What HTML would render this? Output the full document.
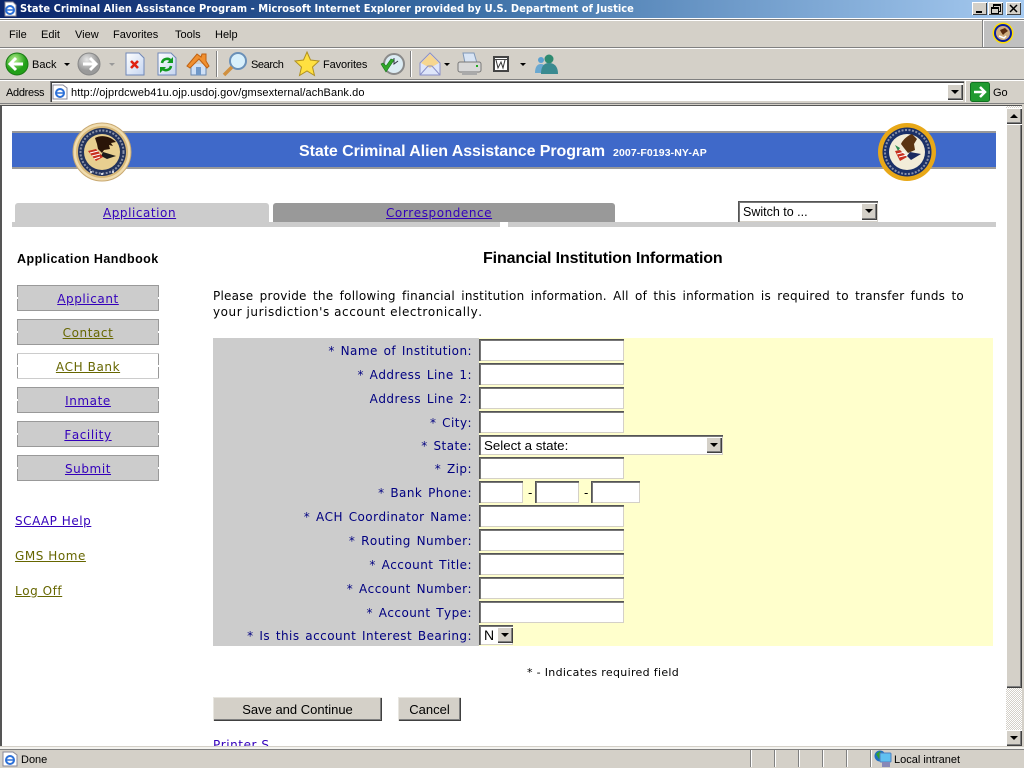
<!DOCTYPE html>
<html lang="en"><head><meta charset="utf-8"><title>State Criminal Alien Assistance Program</title>
<style>
html,body{margin:0;padding:0;width:1024px;height:768px;overflow:hidden;background:#d4d0c8}
body{position:relative;font-family:"Liberation Sans",sans-serif;color:#000}
.a{position:absolute}
.t{position:absolute;white-space:nowrap}
.m{font:11px/14px "Liberation Sans",sans-serif;letter-spacing:0;color:#000}
.l{position:absolute;right:552px;white-space:nowrap;font:12px/16px "DejaVu Sans",sans-serif;font-kerning:none;color:#000080;letter-spacing:.45px;word-spacing:1.5px}
.v{font:12px/16px "DejaVu Sans",sans-serif;font-kerning:none;letter-spacing:.55px}
a{color:#3300bb;text-decoration:underline}
a.o{color:#666600}
.nav{position:absolute;left:17px;width:142px;height:26px;box-sizing:border-box;background:#ccc;border-top:1px solid #999;border-bottom:1px solid #999;text-align:center;font:12px/27px "DejaVu Sans",sans-serif;font-kerning:none;letter-spacing:.58px}
.nav:before,.nav:after{content:"";position:absolute;top:0;bottom:0;width:1px;background:linear-gradient(#999 0,#999 45%,#fff 45%,#fff 55%,#999 55%)}
.nav:before{left:0}.nav:after{right:0}
input.f{position:absolute;left:479px;width:145px;height:22px;box-sizing:border-box;margin:0;padding:0;background:#fff;border:0;box-shadow:inset 1px 1px #555,inset 2px 2px #777,inset -1px -1px #d4d0c8,0 0 0 0 #fff;outline:0}
select.s{position:absolute;box-sizing:border-box;margin:0;padding:0 0 0 5px;border:0;background:#fff;appearance:none;-webkit-appearance:none;font:13.3px "Liberation Sans",sans-serif;color:#000;box-shadow:inset 1px 1px #555,inset 2px 2px #777,inset -1px -1px #d4d0c8,inset -2px -2px #fff}
.ar{position:absolute;width:16px;height:16px;box-sizing:border-box;background:#d4d0c8;box-shadow:inset 1px 1px #fff,inset -1px -1px #404040,inset -2px -2px #808080}
.ar:after{content:"";position:absolute;left:4px;top:6px;border-left:4px solid transparent;border-right:4px solid transparent;border-top:4px solid #000}
.up:after{border-top:0;border-bottom:4px solid #000}
.wb{position:absolute;top:2px;width:15px;height:13px;background:#d4d0c8;box-shadow:inset 1px 1px #fff,inset -1px -1px #404040}
.btn{position:absolute;box-sizing:border-box;border:0;margin:0;padding:0;background:#d4d0c8;font:13px "Liberation Sans",sans-serif;color:#000;box-shadow:inset 1px 1px #e8e6e0,inset -1px -1px #404040,inset -2px -2px #808080}
.dr{position:absolute;width:0;height:0;border-left:3px solid transparent;border-right:3px solid transparent;border-top:3px solid #000}
.sb{position:absolute;top:750px;width:1px;height:17px;background:#808080;box-shadow:1px 0 #fff}
</style></head><body>

<!-- title bar -->
<div class="a" style="left:0;top:0;width:1024px;height:18px;background:linear-gradient(90deg,#0a246a 0,#3a6ea5 45%,#a6caf0 100%)"></div>
<svg class="a" style="left:2px;top:1px" width="16" height="16" viewBox="0 0 16 16"><path d="M3 1h8l3 3v11H3z" fill="#fff" stroke="#889"/><circle cx="8" cy="9" r="4" fill="none" stroke="#2c70d8" stroke-width="2"/><path d="M4 9h8" stroke="#2c70d8" stroke-width="1.5"/></svg>
<div class="t" style="left:20px;top:1px;font:bold 11px/16px 'DejaVu Sans Condensed','DejaVu Sans',sans-serif;color:#fff;letter-spacing:.03px">State Criminal Alien Assistance Program - Microsoft Internet Explorer provided by U.S. Department of Justice</div>
<div class="wb" style="left:972px"><div class="a" style="left:4px;top:9px;width:6px;height:2px;background:#000"></div></div>
<div class="wb" style="left:988px"><div class="a" style="left:5px;top:2px;width:6px;height:5px;border:1px solid #000;border-top-width:2px"></div><div class="a" style="left:3px;top:5px;width:6px;height:4px;border:1px solid #000;border-top-width:2px;background:#d4d0c8"></div></div>
<div class="wb" style="left:1006px"><svg class="a" style="left:3px;top:2px" width="9" height="9"><path d="M1 1l7 7M8 1l-7 7" stroke="#000" stroke-width="1.5"/></svg></div>

<!-- menu -->
<div class="a" style="left:0;top:18px;width:1024px;height:1px;background:#fff"></div>
<div class="a" style="left:0;top:19px;width:1024px;height:1px;background:#808080"></div>
<div class="a" style="left:0;top:20px;width:1024px;height:1px;background:#fff"></div>
<div class="t m" style="left:9px;top:28px">File</div>
<div class="t m" style="left:41px;top:28px">Edit</div>
<div class="t m" style="left:75px;top:28px">View</div>
<div class="t m" style="left:113px;top:28px">Favorites</div>
<div class="t m" style="left:175px;top:28px">Tools</div>
<div class="t m" style="left:215px;top:28px">Help</div>
<div class="a" style="left:982px;top:20px;width:1px;height:27px;background:#808080;box-shadow:1px 0 #fff"></div>
<div class="a" style="left:984px;top:21px;width:40px;height:26px;background:#c0c0c0"></div>
<svg class="a" style="left:991px;top:21px" width="24" height="24" viewBox="0 0 24 24"><circle cx="12" cy="12" r="10.500" fill="#ffe000"/><circle cx="12" cy="12" r="9" fill="#0a1ea0"/><circle cx="12" cy="12" r="7" fill="#cfae80"/><path d="M9 9l5-2 3 3-3 2-2 2-2-3z" fill="#5a2c10"/><path d="M8 15l5 2 2-2" stroke="#fff" stroke-width="1.500" fill="none"/></svg>
<div class="a" style="left:0;top:47px;width:1024px;height:1px;background:#808080"></div>
<div class="a" style="left:0;top:48px;width:1024px;height:1px;background:#fff"></div>

<!-- toolbar -->
<svg class="a" style="left:0;top:49px" width="570" height="31" viewBox="0 49 570 31">
<defs>
<radialGradient id="g1" cx=".4" cy=".3"><stop offset="0" stop-color="#b8f090"/><stop offset="1" stop-color="#22a018"/></radialGradient>
<radialGradient id="g2" cx=".4" cy=".3"><stop offset="0" stop-color="#e8e8e8"/><stop offset="1" stop-color="#999"/></radialGradient>
<linearGradient id="gd" x1="0" y1="0" x2="1" y2="1"><stop offset="0" stop-color="#fff"/><stop offset="1" stop-color="#c4d4f0"/></linearGradient>
</defs>
<circle cx="17" cy="64" r="11" fill="url(#g1)" stroke="#1a7a14"/><path d="M23 64H12M16 58l-6 6 6 6" stroke="#fff" stroke-width="3" fill="none"/>
<circle cx="89" cy="64" r="11" fill="url(#g2)" stroke="#888"/><path d="M83 64h11M90 58l6 6-6 6" stroke="#fff" stroke-width="3" fill="none"/>
<path d="M126 53h13l5 5v17h-18z" fill="url(#gd)" stroke="#7088b8"/><path d="M131 61l7 7M138 61l-7 7" stroke="#e02010" stroke-width="2.600"/>
<path d="M158 53h13l5 5v17h-18z" fill="url(#gd)" stroke="#7088b8"/><path d="M162 63a5 5 0 0 1 9-2M171 66a5 5 0 0 1-9 2" stroke="#129a20" stroke-width="2.600" fill="none"/><path d="M173 57v6h-6zM160 73v-6h6z" fill="#129a20"/>
<path d="M191 64v11h15V64" fill="#cfe0f6" stroke="#6a88b0"/><path d="M187 66l10-12 4 3 1-3h4v7l3 5-2 2-8-9-9 9z" fill="#f09030" stroke="#c06010"/><rect x="196" y="67" width="5" height="8" fill="#7098c8"/>
<rect x="216" y="51" width="1" height="26" fill="#808080"/><rect x="217" y="51" width="1" height="26" fill="#fff"/>
<circle cx="238" cy="61" r="8" fill="#d8f0fc" stroke="#6a90b8" stroke-width="2"/><path d="M232 67l-8 8" stroke="#d09040" stroke-width="3.500"/>
<path d="M307 52l3.500 8 8.500 1-6.500 6 2 8.500-7.500-4.500-7.500 4.500 2-8.500-6.500-6 8.500-1z" fill="#ffe040" stroke="#b09020"/>
<circle cx="394" cy="64" r="10" fill="#dcecf4" stroke="#8a8a8a" stroke-width="2"/><path d="M394 58v6l4-3" stroke="#334" fill="none"/><path d="M381 64l5 8 8-12-3-1-5 7-3-3z" fill="#30a828" stroke="#187018" stroke-width=".6"/>
<rect x="410" y="51" width="1" height="26" fill="#808080"/><rect x="411" y="51" width="1" height="26" fill="#fff"/>
<path d="M420 63l10-10 10 10v12h-20z" fill="#dfe6fa" stroke="#8a90c8"/><path d="M421 63l9-9 9 9-9 5z" fill="#f6d690"/><path d="M420 75l8-9h4l8 9" fill="none" stroke="#8a90c8"/>
<path d="M463 53h11l3 10h-12z" fill="#d8e4f4" stroke="#8098b8"/><rect x="458" y="62" width="23" height="10" rx="2" fill="#d8d8d8" stroke="#777"/><rect x="462" y="72" width="15" height="3" fill="#aaa"/><rect x="476" y="65" width="2" height="2" fill="#2a2"/>
<rect x="493" y="56" width="16" height="16" fill="#444"/><rect x="495" y="60" width="12" height="10" fill="#fff"/><path d="M496 60l2 8 3-6 2 6 2-8" stroke="#333" fill="none"/><rect x="495" y="58" width="12" height="1" fill="#fff"/>
<circle cx="541" cy="60" r="3" fill="#5aa0d0"/><path d="M535 73c0-7 3-9 6-9s5 2 5 9z" fill="#6aa8d0"/><circle cx="549" cy="59" r="4.500" fill="#2e8a70"/><path d="M541 74c0-9 4-11 8-11s9 2 9 11z" fill="#3a8a90"/>
</svg>
<div class="t m" style="left:32px;top:58px">Back</div>
<div class="dr" style="left:64px;top:63px"></div>
<div class="dr" style="left:109px;top:63px;border-top-color:#999"></div>
<div class="t m" style="left:251px;top:58px;letter-spacing:-.4px">Search</div>
<div class="t m" style="left:323px;top:58px;letter-spacing:-.1px">Favorites</div>
<div class="dr" style="left:444px;top:63px"></div>
<div class="dr" style="left:520px;top:63px"></div>

<!-- address bar -->
<div class="a" style="left:0;top:79px;width:1024px;height:1px;background:#808080"></div>
<div class="a" style="left:0;top:80px;width:1024px;height:1px;background:#fff"></div>
<div class="t m" style="left:6px;top:86px;letter-spacing:-.3px">Address</div>
<div class="a" style="left:50px;top:81px;width:914px;height:21px;background:#fff;box-sizing:border-box;box-shadow:inset 1px 1px #808080,inset 2px 2px #404040,inset -1px -1px #d4d0c8"></div>
<svg class="a" style="left:52px;top:84px" width="16" height="16" viewBox="0 0 16 16"><path d="M1 1h10l4 3v11H1z" fill="#fff" stroke="#889"/><circle cx="8" cy="9" r="4" fill="none" stroke="#2c70d8" stroke-width="2"/><path d="M4 9h8" stroke="#2c70d8" stroke-width="1.500"/></svg>
<div class="t m" style="left:71px;top:86px;letter-spacing:.1px">http://ojprdcweb41u.ojp.usdoj.gov/gmsexternal/achBank.do</div>
<div class="ar" style="left:947px;top:84px"></div>
<div class="a" style="left:965px;top:81px;width:1px;height:22px;background:#fff"></div>
<svg class="a" style="left:970px;top:82px" width="20" height="20" viewBox="0 0 20 20"><rect x=".5" y=".5" width="19" height="19" rx="2" fill="#209a30" stroke="#107020"/><path d="M4 10h10M10 5l5 5-5 5" stroke="#fff" stroke-width="2.500" fill="none"/></svg>
<div class="t m" style="left:993px;top:86px">Go</div>
<div class="a" style="left:0;top:102px;width:1024px;height:1px;background:#d4d0c8"></div>
<div class="a" style="left:0;top:103px;width:1024px;height:1px;background:#808080"></div>
<div class="a" style="left:0;top:104px;width:1024px;height:1px;background:#d4d0c8"></div>

<!-- page viewport -->
<div class="a" style="left:0;top:105px;width:1024px;height:1px;background:#555"></div>
<div class="a" style="left:0;top:105px;width:2px;height:642px;background:#555"></div>
<div class="a" style="left:2px;top:106px;width:1004px;height:640px;background:#fff;overflow:hidden"></div>

<!-- banner -->
<div class="a" style="left:12px;top:131px;width:984px;height:38px;box-sizing:border-box;background:#3f69c9;border-top:2px solid #999;border-bottom:2px solid #999"></div>
<svg class="a" style="left:72px;top:122px" width="60" height="60" viewBox="0 0 60 60"><circle cx="30" cy="30" r="29" fill="#f0dcae" stroke="#c8a870"/><circle cx="30" cy="30" r="26" fill="#d8b878"/><circle cx="30" cy="30" r="24" fill="#22325c"/><circle cx="30" cy="30" r="21.500" fill="none" stroke="#8a92a8" stroke-width="2" stroke-dasharray="2 1.500"/><circle cx="30" cy="30" r="18" fill="#e8cf90"/><path d="M23 16c5-3 14-3 21 4l-5 1 2 3-4-1 1 4-6 1-2 3-4-4-1-5z" fill="#2a1408"/><path d="M31 30l13 4-9 3-6-3z" fill="#1c1c1c"/><path d="M16 29l8-2 7 8-7 4z" fill="#c83020"/><path d="M18 31l8-2M20 34l8-2M22 37l6-2" stroke="#fff"/><circle cx="19" cy="50" r="1" fill="#fff"/><circle cx="30" cy="52" r="1" fill="#fff"/><circle cx="41" cy="50" r="1" fill="#fff"/></svg>
<svg class="a" style="left:877px;top:122px" width="60" height="60" viewBox="0 0 60 60"><circle cx="30" cy="30" r="29" fill="#e8a818"/><circle cx="30" cy="30" r="24.500" fill="#1a3068"/><circle cx="30" cy="30" r="22" fill="none" stroke="#8a92a8" stroke-width="2" stroke-dasharray="2 1.500"/><circle cx="30" cy="30" r="18" fill="#f2ecd8"/><path d="M24 22c2-5 8-9 11-10l5 5-3 5 1 6-7 3-4-5z" fill="#5a3412"/><path d="M33 30l11 2-10 6-4-4z" fill="#1a2a60"/><path d="M18 29l5-1 7 7-7 4z" fill="#c83020"/><path d="M18 23l5 3-2 3z" fill="#2a8a50"/><path d="M20 32l8-2M22 35l8-2" stroke="#fff"/></svg>
<div class="t" style="left:299px;top:142px;font:bold 16px/19px 'Liberation Sans',sans-serif;color:#fff;letter-spacing:-.08px">State Criminal Alien Assistance Program</div>
<div class="t" style="left:613px;top:146px;font:bold 10.500px/14px 'Liberation Sans',sans-serif;color:#fff;letter-spacing:.1px">2007-F0193-NY-AP</div>

<!-- tabs -->
<div class="a" style="left:15px;top:203px;width:254px;height:20px;background:#ccc;border-radius:3px 3px 0 0"></div>
<div class="a" style="left:273px;top:203px;width:342px;height:19px;background:#999;border-radius:3px 3px 0 0"></div>
<div class="a" style="left:12px;top:222px;width:488px;height:5px;background:#ccc"></div>
<div class="a" style="left:508px;top:222px;width:488px;height:5px;background:#ccc"></div>
<div class="t v" style="left:103px;top:205px"><a href="#">Application</a></div>
<div class="t v" style="left:386px;top:205px"><a href="#">Correspondence</a></div>
<select class="s" style="left:738px;top:201px;width:140px;height:21px;font-size:12.500px"><option>Switch to ...</option></select>
<div class="ar" style="left:861px;top:203px;height:17px"></div>

<!-- sidebar -->
<div class="t" style="left:17px;top:251px;font:bold 12.500px/16px 'Liberation Sans',sans-serif;letter-spacing:.45px">Application Handbook</div>
<div class="nav" style="top:285px"><a href="#">Applicant</a></div>
<div class="nav" style="top:319px"><a href="#" class="o">Contact</a></div>
<div class="nav" style="top:353px;background:#fff;border-color:#ccc"><a href="#" class="o">ACH Bank</a></div>
<div class="nav" style="top:387px"><a href="#">Inmate</a></div>
<div class="nav" style="top:421px"><a href="#">Facility</a></div>
<div class="nav" style="top:455px"><a href="#">Submit</a></div>
<div class="t v" style="left:15px;top:513px"><a href="#">SCAAP Help</a></div>
<div class="t v" style="left:15px;top:548px"><a href="#" class="o">GMS Home</a></div>
<div class="t v" style="left:15px;top:583px"><a href="#" class="o">Log Off</a></div>

<!-- main -->
<div class="t" style="left:483px;top:249px;font:bold 16px/19px 'Liberation Sans',sans-serif;letter-spacing:-.12px">Financial Institution Information</div>
<div class="a v" style="left:213px;top:288px;width:751px;text-align:justify;text-align-last:justify;white-space:nowrap;letter-spacing:.24px">Please provide the following financial institution information. All of this information is required to transfer funds to</div>
<div class="t v" style="left:213px;top:304px">your jurisdiction's account electronically.</div>

<div class="a" style="left:213px;top:338px;width:266px;height:308px;background:#ccc"></div>
<div class="a" style="left:479px;top:338px;width:514px;height:308px;background:#ffc"></div>

<div class="l" style="top:343px">* Name of Institution:</div>
<div class="l" style="top:367px">* Address Line 1:</div>
<div class="l" style="top:391px">Address Line 2:</div>
<div class="l" style="top:415px">* City:</div>
<div class="l" style="top:438px">* State:</div>
<div class="l" style="top:461px">* Zip:</div>
<div class="l" style="top:485px">* Bank Phone:</div>
<div class="l" style="top:509px">* ACH Coordinator Name:</div>
<div class="l" style="top:533px">* Routing Number:</div>
<div class="l" style="top:557px">* Account Title:</div>
<div class="l" style="top:581px">* Account Number:</div>
<div class="l" style="top:605px">* Account Type:</div>
<div class="l" style="top:628px">* Is this account Interest Bearing:</div>

<input class="f" style="top:339px"><input class="f" style="top:363px"><input class="f" style="top:387px"><input class="f" style="top:411px">
<select class="s" style="left:479px;top:435px;width:244px;height:20px"><option>Select a state:</option></select>
<div class="ar" style="left:706px;top:437px"></div>
<input class="f" style="top:457px">
<input class="f" style="top:481px;width:44px"><div class="t v" style="left:528px;top:485px">-</div>
<input class="f" style="top:481px;left:535px;width:44px"><div class="t v" style="left:584px;top:485px">-</div>
<input class="f" style="top:481px;left:591px;width:49px">
<input class="f" style="top:505px"><input class="f" style="top:529px"><input class="f" style="top:553px"><input class="f" style="top:577px"><input class="f" style="top:601px">
<select class="s" style="left:479px;top:625px;width:34px;height:20px;font-size:14px"><option>N</option></select>
<div class="ar" style="left:497px;top:627px"></div>

<div class="t" style="left:527px;top:665px;font:11px/16px 'DejaVu Sans',sans-serif;letter-spacing:.32px">* - Indicates required field</div>
<button class="btn" style="left:213px;top:697px;width:169px;height:24px">Save and Continue</button>
<button class="btn" style="left:398px;top:697px;width:63px;height:24px">Cancel</button>
<div class="a" style="left:213px;top:700px;width:100px;height:46px;overflow:hidden;pointer-events:none"><div class="t v" style="left:0;top:37px"><a href="#">Printer S</a></div></div>

<!-- scrollbar -->
<div class="a" style="left:1006px;top:106px;width:16px;height:640px;background:repeating-conic-gradient(#d4d0c8 0 25%,#fff 0 50%) 0 0/2px 2px"></div>
<div class="ar up" style="left:1006px;top:108px"></div>
<div class="a" style="left:1006px;top:124px;width:16px;height:564px;background:#d4d0c8;box-sizing:border-box;box-shadow:inset 1px 1px #fff,inset -1px -1px #404040,inset -2px -2px #808080"></div>
<div class="ar" style="left:1006px;top:730px"></div>
<div class="a" style="left:1022px;top:105px;width:2px;height:642px;background:#d4d0c8"></div>

<!-- status bar -->
<div class="a" style="left:0;top:746px;width:1024px;height:1px;background:#d4d0c8"></div>
<div class="a" style="left:0;top:747px;width:1024px;height:2px;background:#f4f3ef"></div>
<div class="a" style="left:0;top:749px;width:1024px;height:1px;background:#808080"></div>
<svg class="a" style="left:2px;top:751px" width="16" height="16" viewBox="0 0 16 16"><path d="M1 1h10l4 3v11H1z" fill="#fff" stroke="#889"/><circle cx="8" cy="9" r="4" fill="none" stroke="#2c70d8" stroke-width="2"/><path d="M4 9h8" stroke="#2c70d8" stroke-width="1.500"/></svg>
<div class="t m" style="left:21px;top:753px">Done</div>
<div class="sb" style="left:750px"></div><div class="sb" style="left:774px"></div><div class="sb" style="left:798px"></div><div class="sb" style="left:822px"></div><div class="sb" style="left:846px"></div><div class="sb" style="left:870px"></div>
<svg class="a" style="left:874px;top:750px" width="18" height="18" viewBox="0 0 18 18"><circle cx="6" cy="6" r="5.500" fill="#2070c0"/><path d="M2 4l4-3 2 4-3 4z" fill="#30a030"/><rect x="6" y="3" width="11" height="9" rx="1" fill="#60c0f0" stroke="#5080c0"/><rect x="8" y="12" width="8" height="5" fill="#8888b8"/></svg>
<div class="t m" style="left:894px;top:753px">Local intranet</div>
</body></html>
